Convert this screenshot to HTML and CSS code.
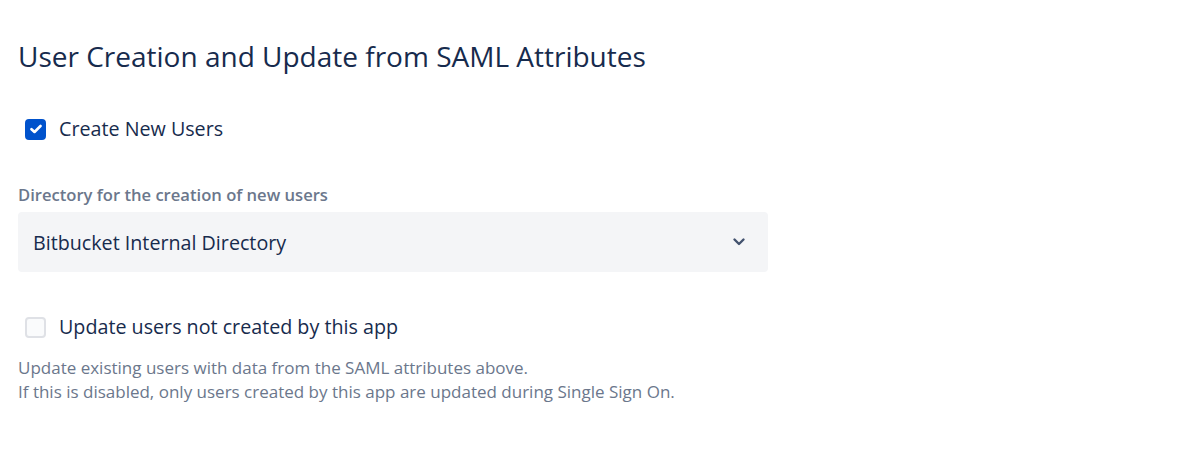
FILE: index.html
```html
<!DOCTYPE html>
<html>
<head>
<meta charset="utf-8">
<link rel="stylesheet" href="styles.css">
</head>
<body>
<div class="page">
  <h1 class="title">User Creation and Update from SAML Attributes</h1>
  <label class="check">
    <span class="box checked">
      <svg width="12" height="10" viewBox="0 0 12 10"><path d="M1.5 5.2 L4.5 8 L10.5 2" fill="none" stroke="#fff" stroke-width="2.6" stroke-linecap="round" stroke-linejoin="round"/></svg>
    </span>
    <span class="check-text">Create New Users</span>
  </label>
  <div class="field">
    <div class="field-label">Directory for the creation of new users</div>
    <div class="select">
      <span class="select-value">Bitbucket Internal Directory</span>
      <svg class="chev" width="14" height="10" viewBox="0 0 14 10"><path d="M2.5 2.5 L7 7 L11.5 2.5" fill="none" stroke="#42526E" stroke-width="2.4" stroke-linecap="round" stroke-linejoin="round"/></svg>
    </div>
  </div>
  <label class="check check2">
    <span class="box"></span>
    <span class="check-text">Update users not created by this app</span>
  </label>
  <div class="help">
    <div>Update existing users with data from the SAML attributes above.</div>
    <div>If this is disabled, only users created by this app are updated during Single Sign On.</div>
  </div>
</div>
</body>
</html>
```
FILE: styles.css
```css
html, body {
  margin: 0;
  padding: 0;
  background: #fff;
}
body {
  font-family: "Open Sans", "Noto Sans", sans-serif;
  color: #172B4D;
}
.page {
  padding: 38px 18px 0 18px;
  width: 750px;
}
.title {
  margin: 0;
  font-size: 28px;
  font-weight: 400;
  line-height: 36px;
  color: #172B4D;
}
.check {
  display: flex;
  align-items: center;
  gap: 13px;
  padding-left: 7px;
  margin-top: 43px;
  height: 24px;
}
.box {
  width: 17px;
  height: 17px;
  border: 2px solid #DFE1E6;
  background: #FAFBFC;
  border-radius: 4px;
  display: flex;
  align-items: center;
  justify-content: center;
  flex-shrink: 0;
}
.box.checked {
  background: #0052CC;
  border-color: #0052CC;
}
.check-text {
  font-size: 19.7px;
  line-height: 24px;
}
.field {
  margin-top: 44px;
}
.field-label {
  font-size: 16.6px;
  font-weight: 600;
  color: #6B778C;
  line-height: 20px;
}
.select {
  margin-top: 7px;
  height: 60px;
  background: #F4F5F7;
  border-radius: 4px;
  display: flex;
  align-items: center;
  justify-content: space-between;
  padding: 0 22px 0 15px;
}
.select-value {
  font-size: 19.7px;
}
.check2 {
  margin-top: 43px;
}
.help {
  margin-top: 17px;
  font-size: 17px;
  line-height: 24px;
  color: #6B778C;
}
```
